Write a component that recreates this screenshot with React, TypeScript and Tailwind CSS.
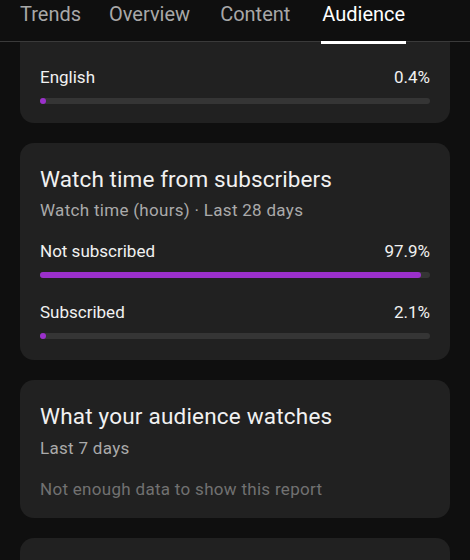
import React from "react";

const tabs = ["Trends", "Overview", "Content", "Audience"];
const tabGap: Record<string, string> = {
  Trends: "mr-[28px]",
  Overview: "mr-[30px]",
  Content: "mr-[31px]",
  Audience: "",
};

function Bar({ pct }: { pct: number }) {
  return (
    <div className="h-[6px] w-full rounded-full bg-[#353535]">
      <div
        className="h-full min-w-[6px] rounded-full bg-[#9b30cb]"
        style={{ width: `${pct}%` }}
      />
    </div>
  );
}

function Row({ label, value, pct, gap }: { label: string; value: string; pct: number; gap: string }) {
  return (
    <div className={gap}>
      <div className="flex h-[24px] items-center justify-between text-[17px] text-[#f1f1f1]">
        <span>{label}</span>
        <span>{value}</span>
      </div>
      <div className="mt-[8px]">
        <Bar pct={pct} />
      </div>
    </div>
  );
}

export default function App() {
  return (
    <div
      className="h-[560px] w-[470px] overflow-hidden bg-[#0f0f0f]"
      style={{ fontFamily: "Roboto, 'Noto Sans', sans-serif" }}
    >
      <div className="flex h-[42px] border-b border-[#3a3a3a] pl-[20px]">
        {tabs.map((t) => (
          <div
            key={t}
            className={
              t === "Audience"
                ? "relative h-[42px] px-[1px] text-[20px] leading-[28px] text-white"
                : `relative h-[42px] text-[20px] leading-[28px] text-[#a8a8a8] ${tabGap[t]}`
            }
          >
            {t}
            {t === "Audience" && (
              <div className="absolute bottom-[-2px] left-0 right-0 h-[3px] bg-white" />
            )}
          </div>
        ))}
      </div>

      <div className="flex flex-col gap-[20px] px-[20px]">
        <div className="rounded-b-[14px] bg-[#212121] px-[20px] pb-[19px] pt-[24px]">
          <Row label="English" value="0.4%" pct={0.4} gap="" />
        </div>

        <div className="rounded-[14px] bg-[#212121] px-[20px] pb-[21px] pt-[22px]">
          <div className="text-[22.5px] leading-[28px] tracking-[0.1px] text-[#f1f1f1]">
            Watch time from subscribers
          </div>
          <div className="mt-[6px] text-[17px] leading-[22px] tracking-[0.3px] text-[#aaaaaa]">
            Watch time (hours) · Last 28 days
          </div>
          <Row label="Not subscribed" value="97.9%" pct={97.7} gap="mt-[19px]" />
          <Row label="Subscribed" value="2.1%" pct={1.5} gap="mt-[23px]" />
        </div>

        <div className="rounded-[14px] bg-[#212121] px-[20px] pb-[18px] pt-[22px]">
          <div className="text-[22.5px] leading-[28px] tracking-[0.2px] text-[#f1f1f1]">
            What your audience watches
          </div>
          <div className="mt-[7px] text-[17px] leading-[22px] tracking-[0.3px] text-[#aaaaaa]">
            Last 7 days
          </div>
          <div className="mt-[19px] text-[17px] leading-[22px] tracking-[0.3px] text-[#717171]">
            Not enough data to show this report
          </div>
        </div>

        <div className="h-[60px] rounded-[14px] bg-[#212121]" />
      </div>
    </div>
  );
}
